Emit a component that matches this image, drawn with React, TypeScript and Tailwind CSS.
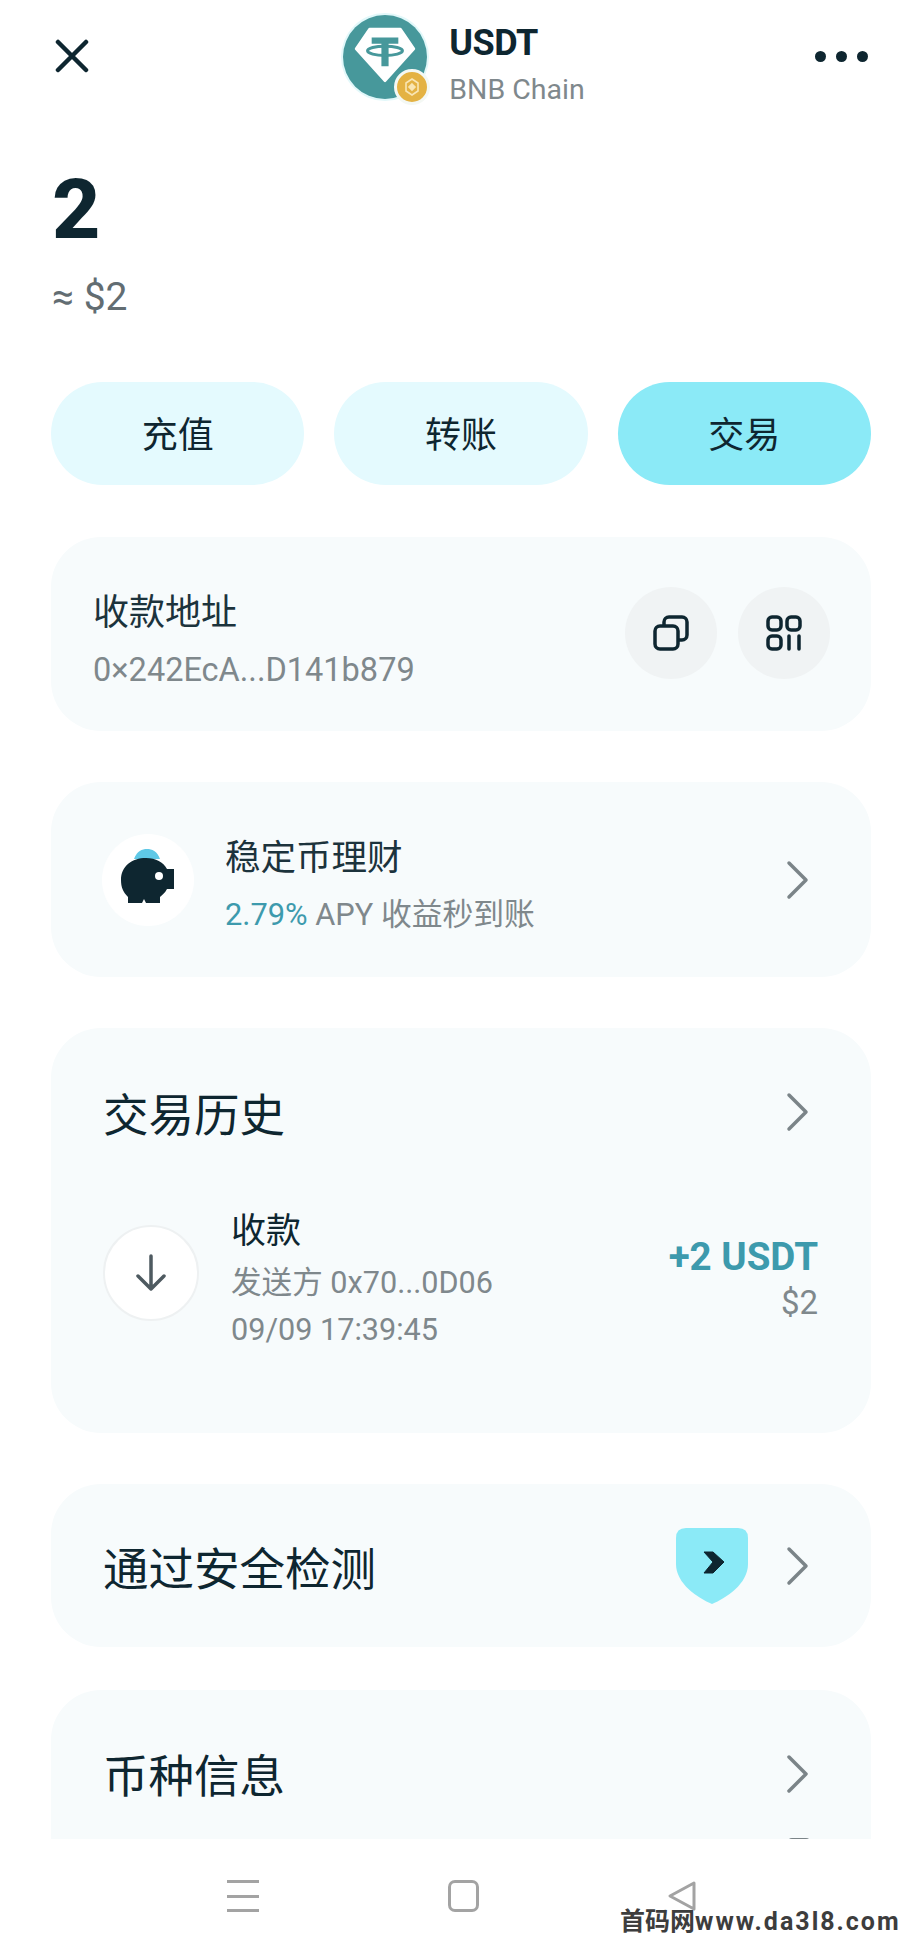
import { ReactNode } from "react";

const font = { fontFamily: '"Roboto", "Noto Sans CJK SC", sans-serif' };

function Chevron() {
  return (
    <svg width="24" height="40" viewBox="0 0 24 40" fill="none" className="shrink-0">
      <path d="M3 3 L20 20 L3 37" stroke="#7b8488" strokeWidth="3.5" strokeLinecap="round" strokeLinejoin="round" />
    </svg>
  );
}

function Card({ className, children }: { className: string; children: ReactNode }) {
  return <section className={`ml-[51px] w-[820px] shrink-0 rounded-[50px] bg-[#f7fbfc] ${className}`}>{children}</section>;
}

function TokenLogo() {
  return (
    <div className="relative h-[84px] w-[84px] shrink-0 rounded-full bg-[#47989b] ring-2 ring-[#e2f8fa]">
      <svg width="84" height="84" viewBox="0 0 82 82" className="absolute inset-0">
        <path d="M26 14 H56 L69 33 L41 64 L13 33 Z" fill="#fff" strokeLinejoin="round" stroke="#fff" strokeWidth="3" />
        <path d="M28 22 H54 V28 H44.5 V50 H37.5 V28 H28 Z" fill="#47989b" />
        <ellipse cx="41" cy="35" rx="17" ry="4.5" fill="none" stroke="#47989b" strokeWidth="3" />
      </svg>
      <div className="absolute bottom-[-6px] right-[-3px] flex h-[36px] w-[36px] items-center justify-center rounded-full border-[3px] border-[#f4f8f4] bg-[#e4b243]">
        <svg width="20" height="20" viewBox="0 0 20 20" fill="none" stroke="#f9e6b4" strokeWidth="1.6">
          <path d="M10 2 L16 6 V14 L10 18 L4 14 V6 Z" />
          <path d="M10 7 L13 10 L10 13 L7 10 Z" fill="#f9e6b4" />
        </svg>
      </div>
    </div>
  );
}

export default function App() {
  return (
    <div className="relative flex h-[1952px] w-[920px] flex-col overflow-hidden bg-white text-[#0e2630]" style={font}>
      <main className="h-[1839px] shrink-0 overflow-hidden">
        {/* Cabecalho */}
        <header className="flex h-[114px] items-center justify-between pl-[55px] pr-[52px]">
          <svg width="34" height="34" viewBox="0 0 34 34" fill="none" className="mb-[2px]">
            <path d="M3 3 L31 31 M31 3 L3 31" stroke="#0e2630" strokeWidth="4.5" strokeLinecap="round" />
          </svg>
          <div className="ml-[24px] flex items-center gap-[22px]">
            <TokenLogo />
            <div className="pt-[17px]">
              <p className="text-[36px] leading-[42px] font-bold tracking-[-0.5px]">USDT</p>
              <p className="mt-[7px] text-[28.5px] leading-[38px] text-[#7f888c]">BNB Chain</p>
            </div>
          </div>
          <div className="mb-[2px] flex gap-[10px]">
            <span className="h-[11px] w-[11px] rounded-full bg-[#0e2630]" />
            <span className="h-[11px] w-[11px] rounded-full bg-[#0e2630]" />
            <span className="h-[11px] w-[11px] rounded-full bg-[#0e2630]" />
          </div>
        </header>

        {/* Saldo */}
        <div className="h-[268px] pl-[52px] pt-[58px]">
          <p className="text-[84px] leading-[76px] font-extrabold">2</p>
          <p className="mt-[29px] text-[39px] leading-[40px] text-[#626d72]">≈ $2</p>
        </div>

        {/* Acoes */}
        <div className="ml-[51px] flex w-[820px] gap-[30px]">
          <button className="h-[103px] flex-1 rounded-full bg-[#e4fafe] pt-[4px] text-[36px]">充值</button>
          <button className="h-[103px] flex-1 rounded-full bg-[#e4fafe] pt-[4px] text-[36px]">转账</button>
          <button className="h-[103px] flex-1 rounded-full bg-[#8beaf7] pt-[4px] text-[36px]">交易</button>
        </div>

        <Card className="mt-[52px] flex h-[194px] items-center justify-between pl-[42px] pr-[41px]">
          <div className="pt-[11px]">
            <p className="text-[36px] leading-[46px] text-[#1c333c]">收款地址</p>
            <p className="mt-[15px] text-[32.5px] leading-[38px] text-[#7f888c]">0×242EcA...D141b879</p>
          </div>
          <div className="mt-[-2px] flex gap-[21px]">
            <div className="flex h-[92px] w-[92px] items-center justify-center rounded-full bg-[#f0f3f4]">
              <svg width="36" height="36" viewBox="0 0 36 36" fill="none" stroke="#0e2630" strokeWidth="3.5" strokeLinejoin="round">
                <rect x="2" y="11" width="23" height="23" rx="5" />
                <path d="M11 11 V7 a5 5 0 0 1 5 -5 H29 a5 5 0 0 1 5 5 V20 a5 5 0 0 1 -5 5 H25" />
              </svg>
            </div>
            <div className="flex h-[92px] w-[92px] items-center justify-center rounded-full bg-[#f0f3f4]">
              <svg width="36" height="36" viewBox="0 0 36 36" fill="none" stroke="#0e2630" strokeWidth="3.5" strokeLinecap="round">
                <rect x="2" y="2" width="13" height="13" rx="4" />
                <rect x="21" y="2" width="13" height="13" rx="4" />
                <rect x="2" y="21" width="13" height="13" rx="4" />
                <path d="M23 21 V34 M33 21 V34" />
              </svg>
            </div>
          </div>
        </Card>

        <Card className="mt-[51px] flex h-[195px] items-center pl-[51px] pr-[61px]">
          <div className="flex h-[92px] w-[92px] shrink-0 items-center justify-center rounded-full bg-white">
            <svg width="60" height="60" viewBox="0 0 60 60" className="mt-[-6px]">
              <path d="M16 12 C19 4 24 2 29 2 C34 2 39 4 42 12 Z" fill="#5fc8e6" />
              <path d="M3 33 C3 19 14 11 28 11 C38 11 45 15 49 22 H56 V42 H49 C47 46 44 48 42 50 V56 H28 L26 52 L24 56 H10 V50 C5 45 3 40 3 33 Z" fill="#0e2630" />
              <circle cx="41" cy="29" r="4" fill="#fff" />
            </svg>
          </div>
          <div className="ml-[31px] flex-1 pt-[10px]">
            <p className="text-[35.5px] leading-[46px] text-[#1c333c]">稳定币理财</p>
            <p className="mt-[14px] text-[30.8px] leading-[40px] text-[#7f888c]">
              <span className="text-[#3d9aad]">2.79%</span> APY 收益秒到账
            </p>
          </div>
          <Chevron />
        </Card>

        <Card className="mt-[51px] h-[405px] pl-[52px] pr-[61px]">
          <div className="flex h-[177px] items-center justify-between">
            <h2 className="text-[45.5px] leading-[56px] text-[#0e2630]">交易历史</h2>
            <div className="mb-[10px]"><Chevron /></div>
          </div>
          <div className="flex items-start">
            <div className="mt-[20px] flex h-[96px] w-[96px] shrink-0 items-center justify-center rounded-full border-2 border-[#eef1f2] bg-white">
              <svg width="32" height="38" viewBox="0 0 32 38" fill="none" stroke="#4e5a60" strokeWidth="3.5" strokeLinecap="round" strokeLinejoin="round">
                <path d="M16 2 V35 M3 22 L16 35 L29 22" />
              </svg>
            </div>
            <div className="ml-[32px] mt-[4px] flex-1">
              <p className="text-[35px] leading-[46px]">收款</p>
              <p className="mt-[8px] text-[30.6px] leading-[40px] text-[#7f888c]">发送方 0x70...0D06</p>
              <p className="mt-[7px] text-[30.6px] leading-[40px] text-[#7f888c]">09/09 17:39:45</p>
            </div>
            <div className="mr-[-8px] mt-[29px] text-right">
              <p className="text-[38.5px] leading-[46px] font-bold text-[#3d9aad]">+2 USDT</p>
              <p className="mt-[3px] text-[33px] leading-[40px] text-[#7f888c]">$2</p>
            </div>
          </div>
        </Card>

        <Card className="mt-[51px] flex h-[163px] items-center pl-[52px] pr-[61px]">
          <h2 className="flex-1 pt-[10px] text-[45.5px] leading-[56px]">通过安全检测</h2>
          <svg width="72" height="76" viewBox="0 0 72 76" className="mr-[38px] mt-[1px]">
            <path d="M10 0 H62 Q72 0 72 10 V36 C72 56 50 70 36 76 C22 70 0 56 0 36 V10 Q0 0 10 0 Z" fill="#8beaf7" />
            <path d="M28 24 H37 L48 34 L37 45 H28 L37 34 Z" fill="#0e2630" strokeLinejoin="round" stroke="#0e2630" strokeWidth="1" />
          </svg>
          <Chevron />
        </Card>

        <Card className="mt-[43px] h-[220px] pl-[52px] pr-[61px]">
          <div className="flex h-[148px] items-center justify-between pt-[28px]">
            <h2 className="text-[45.5px] leading-[56px]">币种信息</h2>
            <div className="mb-[8px]"><Chevron /></div>
          </div>
          {/* proxima linha, cortada pela barra inferior */}
          <div className="ml-auto h-[14px] w-[22px] rounded-t-[4px] bg-[#7b8488]" />
        </Card>
      </main>

      {/* Barra de navegacao */}
      <nav className="flex h-[113px] items-start bg-white pl-[227px] pt-[41px]">
        <div className="flex h-[32px] w-[32px] flex-col justify-between">
          <span className="h-[3px] bg-[#a3a3a3]" />
          <span className="h-[3px] bg-[#a3a3a3]" />
          <span className="h-[3px] bg-[#a3a3a3]" />
        </div>
        <div className="ml-[189px] h-[32px] w-[31px] rounded-[7px] border-[3px] border-[#a3a3a3]" />
        <svg width="30" height="32" viewBox="0 0 30 32" fill="none" className="ml-[188px]">
          <path d="M27 3 L3 16 L27 29 Z" stroke="#a3a3a3" strokeWidth="3" strokeLinejoin="round" />
        </svg>
      </nav>

      {/* Marca d'agua */}
      <p className="absolute bottom-[17px] left-[620px] whitespace-nowrap text-[25px] leading-[26px] font-bold text-[#3d3d3d]">
        首码网<span className="tracking-[2px]">www.da3l8.com</span>
      </p>
    </div>
  );
}
